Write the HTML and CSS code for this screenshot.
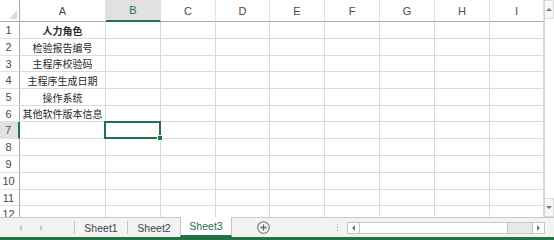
FILE: index.html
```html
<!DOCTYPE html>
<html lang="zh">
<head>
    <meta charset="UTF-8">
    <meta name="viewport" content="width=device-width, initial-scale=1.0">
    <title>Sheet3</title>
    <link rel="stylesheet" href="styles.css">
</head>
<body>
    <div class="workbook">
        <div class="sheet-area">
            <div class="grid" id="grid"></div>
            <div class="vscroll">
                <div class="varrow"><span class="tri up"></span></div>
                <div class="vtrack"></div>
                <div class="varrow"><span class="tri down"></span></div>
            </div>
        </div>

        <div class="tabbar">
            <div class="tab-nav">
                <span class="tri left light"></span>
                <span class="tri right light"></span>
            </div>
            <span class="tab-sep"></span>
            <div class="tab">Sheet1</div>
            <span class="tab-sep"></span>
            <div class="tab">Sheet2</div>
            <div class="tab active">Sheet3</div>
            <div class="add-sheet">
                <svg width="13" height="13" viewBox="0 0 13 13">
                    <circle cx="6.5" cy="6.5" r="5.8" fill="none" stroke="#777" stroke-width="1.1"/>
                    <path d="M6.5 3.5v6M3.5 6.5h6" stroke="#666" stroke-width="1.3"/>
                </svg>
            </div>
            <div class="splitter">
                <span></span><span></span><span></span>
            </div>
            <div class="hscroll">
                <div class="harrow"><span class="tri left"></span></div>
                <div class="hthumb"></div>
                <div class="htrack"></div>
                <div class="harrow"><span class="tri right"></span></div>
            </div>
        </div>
        <div class="statusline"></div>
    </div>

    <script>
        // Column letters and the filled cells of column A
        const columns = ['A', 'B', 'C', 'D', 'E', 'F', 'G', 'H', 'I'];
        const columnA = ['人力角色', '检验报告编号', '主程序校验码', '主程序生成日期', '操作系统', '其他软件版本信息'];
        const selected = { col: 'B', row: 7 };
        const grid = document.getElementById('grid');

        function addCell(className, text) {
            const div = document.createElement('div');
            div.className = className;
            if (text !== undefined) div.textContent = text;
            grid.appendChild(div);
            return div;
        }

        const corner = addCell('corner');
        corner.innerHTML = '<span class="corner-tri"></span>';

        columns.forEach(col => {
            addCell('col-head' + (col === selected.col ? ' active' : ''), col);
        });

        for (let row = 1; row <= 12; row++) {
            addCell('row-head' + (row === selected.row ? ' active' : ''), row);

            columns.forEach((col, i) => {
                let cls = 'cell';
                let text = '';
                if (i === 0 && columnA[row - 1]) {
                    text = columnA[row - 1];
                    if (row === 1) cls += ' bold';
                }
                if (col === selected.col && row === selected.row) cls += ' selected';
                addCell(cls, text);
            });
        }
    </script>
</body>
</html>
```

FILE: styles.css
```css
body {
    margin: 0;
    background-color: #fff;
    font-family: "Liberation Sans", Arial, sans-serif;
}

.workbook {
    width: 554px;
    height: 240px;
    display: flex;
    flex-direction: column;
    overflow: hidden;
}

.sheet-area {
    display: flex;
    height: 217px;
}

/* Spreadsheet grid */
.grid {
    display: grid;
    grid-template-columns: 20px 86px 55px 55px 54px 55px 55px 55px 55px 54px;
    grid-template-rows: 22px 17px 17px 16px 17px 17px 16px 17px 17px 17px 17px 16px 17px;
    width: 544px;
    height: 217px;
    overflow: hidden;
}

.grid > div {
    box-sizing: border-box;
    border-right: 1px solid #dadada;
    border-bottom: 1px solid #dadada;
}

.corner {
    display: flex;
    align-items: flex-end;
    justify-content: flex-end;
    padding: 0 2px 2px 0;
    border-right-color: #ababab !important;
    border-bottom-color: #ababab !important;
}

.corner-tri {
    width: 0;
    height: 0;
    border-left: 8px solid transparent;
    border-bottom: 9px solid #dcdcdc;
}

.col-head {
    display: flex;
    align-items: center;
    justify-content: center;
    font-size: 11px;
    color: #4a4a4a;
    border-right-color: #e2e2e2 !important;
    border-bottom-color: #ababab !important;
}

.col-head.active {
    background-color: #e1e1e1;
    color: #217346;
    border-bottom: 2px solid #217346 !important;
}

.row-head {
    display: flex;
    align-items: center;
    justify-content: center;
    padding-right: 2px;
    font-size: 11px;
    color: #4a4a4a;
    border-right-color: #ababab !important;
    border-bottom-color: #e2e2e2 !important;
}

.row-head.active {
    background-color: #e1e1e1;
    color: #217346;
    border-right: 2px solid #217346 !important;
}

.cell {
    display: flex;
    align-items: center;
    justify-content: center;
    font-family: "Noto Sans CJK SC", sans-serif;
    font-size: 10px;
    color: #2a2a2a;
    white-space: nowrap;
    position: relative;
}

.cell.bold {
    font-weight: bold;
}

/* Selection frame drawn over the active cell */
.cell.selected::after {
    content: "";
    position: absolute;
    top: -1px;
    left: -2px;
    right: -1px;
    bottom: -1px;
    border: 2px solid #217346;
}

.cell.selected::before {
    content: "";
    position: absolute;
    right: -3px;
    bottom: -3px;
    width: 4px;
    height: 4px;
    background-color: #217346;
    border: 1px solid #fff;
    z-index: 1;
}

/* Vertical scrollbar */
.vscroll {
    width: 10px;
    display: flex;
    flex-direction: column;
    box-sizing: border-box;
    border-left: 1px solid #d4d4d4;
    background-color: #fff;
}

.varrow {
    height: 17px;
    display: flex;
    align-items: center;
    justify-content: center;
    background-color: #f7f7f7;
    border: 1px solid #dcdcdc;
    border-left: none;
}

.vtrack {
    flex: 1;
    background-color: #fff;
}

.tri {
    width: 0;
    height: 0;
    display: inline-block;
}

.tri.up {
    border-left: 3px solid transparent;
    border-right: 3px solid transparent;
    border-bottom: 3px solid #777;
}

.tri.down {
    border-left: 3px solid transparent;
    border-right: 3px solid transparent;
    border-top: 3px solid #777;
}

.tri.left {
    border-top: 3px solid transparent;
    border-bottom: 3px solid transparent;
    border-right: 3px solid #777;
}

.tri.right {
    border-top: 3px solid transparent;
    border-bottom: 3px solid transparent;
    border-left: 3px solid #777;
}

.tri.left.light {
    border-right-color: #c4c4c4;
}

.tri.right.light {
    border-left-color: #c4c4c4;
}

/* Sheet tabs */
.tabbar {
    height: 20px;
    box-sizing: border-box;
    display: flex;
    align-items: stretch;
    background-color: #f3f3f3;
    border-top: 1px solid #c6c6c6;
    font-size: 10.5px;
    color: #444;
}

.tab-nav {
    width: 74px;
    display: flex;
    align-items: center;
    gap: 18px;
    padding-left: 19px;
    box-sizing: border-box;
}

.tab-sep {
    width: 1px;
    margin: 3px 0 3px;
    background-color: #c6c6c6;
}

.tab {
    width: 52px;
    display: flex;
    align-items: center;
    justify-content: center;
}

.tab.active {
    width: 52px;
    margin-top: -1px;
    background-color: #fff;
    color: #217346;
    border-left: 1px solid #c6c6c6;
    border-right: 1px solid #c6c6c6;
    border-bottom: 2px solid #217346;
    box-sizing: border-box;
}

.add-sheet {
    margin-left: 25px;
    display: flex;
    align-items: center;
}

.splitter {
    margin-left: 62px;
    width: 10px;
    display: flex;
    flex-direction: column;
    align-items: center;
    justify-content: center;
    gap: 2px;
}

.splitter span {
    width: 1px;
    height: 1px;
    background-color: #999;
}

/* Horizontal scrollbar */
.hscroll {
    margin-left: 5px;
    margin-top: 4px;
    width: 198px;
    height: 12px;
    display: flex;
    box-sizing: border-box;
    border: 1px solid #c6c6c6;
    background-color: #fff;
}

.harrow {
    width: 11px;
    display: flex;
    align-items: center;
    justify-content: center;
    background-color: #fff;
}

.hthumb {
    width: 149px;
    box-sizing: border-box;
    border-left: 1px solid #c6c6c6;
    border-right: 1px solid #c6c6c6;
    background-color: #fff;
}

.htrack {
    flex: 1;
    background-color: #e8e8e8;
    border-right: 1px solid #c6c6c6;
}

.statusline {
    height: 3px;
    background-color: #217346;
}
```
